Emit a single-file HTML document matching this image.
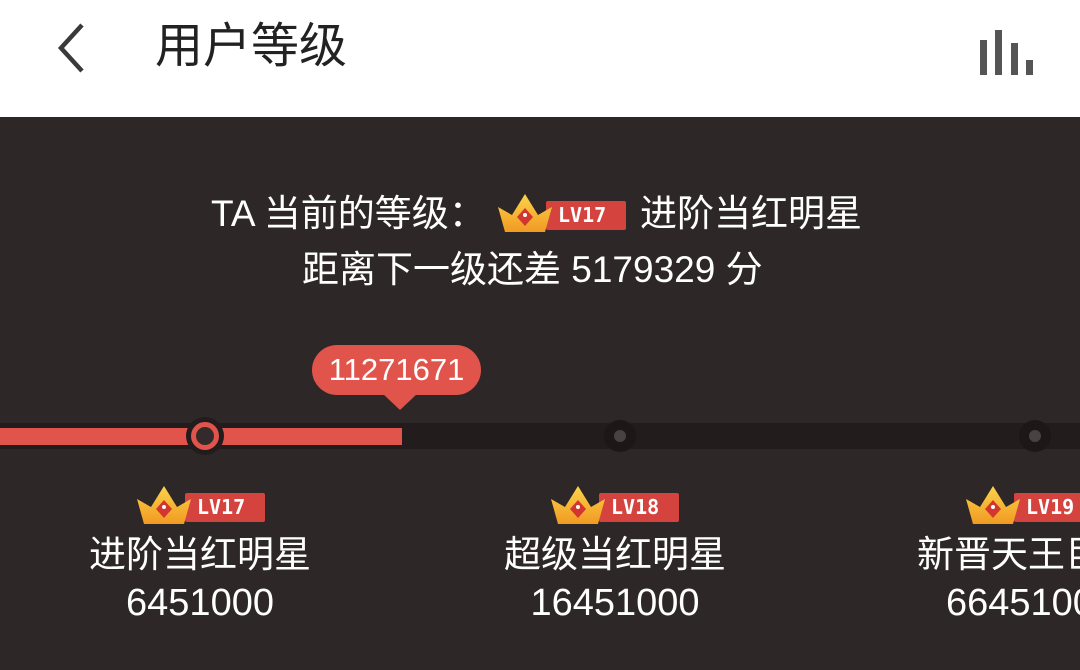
<!DOCTYPE html>
<html><head><meta charset="utf-8"><style>
*{margin:0;padding:0;box-sizing:border-box}
html,body{width:1080px;height:670px;overflow:hidden}
body{background:#2e2727;font-family:"Liberation Sans","Noto Sans CJK SC",sans-serif;position:relative}
#w{position:absolute;left:0;top:0;width:1080px;height:670px;overflow:hidden}
.hdr{position:absolute;left:0;top:0;width:1080px;height:117px;background:#fff}
.t{position:absolute;white-space:nowrap;color:#fff;line-height:1.2}
.badge{position:absolute;width:130px;height:40px}
.lbl{position:absolute;left:48px;top:8px;width:80px;height:29px;background:#d5433f;border-radius:2px;color:#fff;font-weight:bold;font-size:20px;line-height:29px;padding-left:12px;font-family:"DejaVu Sans Mono","Liberation Mono",monospace}
.cr{position:absolute;left:0;top:0}
.c{text-align:center;width:340px}
.n{font-size:37px}
.d{font-size:38px}
</style></head><body><div id="w">
<div class="hdr">
<svg style="position:absolute;left:50px;top:22px" width="40" height="52"><path d="M32 3 L11 26 L32 49" stroke="#3a3a3a" stroke-width="4.5" fill="none"/></svg>
<div class="t" style="left:155px;top:18px;font-size:48px;color:#222">用户等级</div>
<div style="position:absolute;left:980px;top:40px;width:7px;height:35px;background:#555"></div>
<div style="position:absolute;left:995px;top:30px;width:7px;height:45px;background:#555"></div>
<div style="position:absolute;left:1011px;top:43px;width:7px;height:32px;background:#555"></div>
<div style="position:absolute;left:1026px;top:60px;width:7px;height:15px;background:#555"></div>
</div>

<svg width="0" height="0" style="position:absolute"><defs>
<linearGradient id="g" x1="0" y1="0" x2="0" y2="1"><stop offset="0" stop-color="#fcd34a"/><stop offset="1" stop-color="#f09a22"/></linearGradient>
<symbol id="crown" viewBox="0 0 54 40"><polygon points="0,14 14,22 27,1 40,22 54,14 47,39 7,39" fill="url(#g)"/><polygon points="27,15 35,24 27,33 19,24" fill="#d2362f"/><circle cx="27" cy="22" r="2" fill="#fff"/></symbol>
</defs></svg>

<div class="t n" style="left:211px;top:192px">TA 当前的等级：</div>
<div class="badge" style="left:498px;top:193px"><div class="lbl">LV17</div><svg class="cr" width="54" height="40"><use href="#crown"/></svg></div>
<div class="t n" style="left:640px;top:192px">进阶当红明星</div>
<div class="t n" style="left:302px;top:248px">距离下一级还差 5179329 分</div>

<div style="position:absolute;left:312px;top:345px;width:169px;height:50px;background:#e0544c;border-radius:25px;color:#fff;font-size:31px;line-height:50px;text-align:center">11271671</div>
<svg style="position:absolute;left:382px;top:393px" width="36" height="18"><polygon points="0,0 36,0 18,17" fill="#e0544c"/></svg>

<div style="position:absolute;left:0;top:423px;width:1080px;height:26px;background:#221c1c"></div>
<div style="position:absolute;left:0;top:428px;width:402px;height:17px;background:#e0544c"></div>
<div style="position:absolute;left:186px;top:417px;width:38px;height:38px;border-radius:50%;background:#221c1c"></div>
<div style="position:absolute;left:191px;top:422px;width:28px;height:28px;border-radius:50%;border:5px solid #e0544c;background:#332b2b"></div>
<div style="position:absolute;left:604px;top:420px;width:32px;height:32px;border-radius:50%;background:#1d1717"></div>
<div style="position:absolute;left:614px;top:430px;width:12px;height:12px;border-radius:50%;background:#4a4242"></div>
<div style="position:absolute;left:1019px;top:420px;width:32px;height:32px;border-radius:50%;background:#1d1717"></div>
<div style="position:absolute;left:1029px;top:430px;width:12px;height:12px;border-radius:50%;background:#4a4242"></div>

<div class="badge" style="left:137px;top:485px"><div class="lbl">LV17</div><svg class="cr" width="54" height="40"><use href="#crown"/></svg></div>
<div class="t c n" style="left:30px;top:533px">进阶当红明星</div>
<div class="t c d" style="left:30px;top:581px">6451000</div>

<div class="badge" style="left:551px;top:485px"><div class="lbl">LV18</div><svg class="cr" width="54" height="40"><use href="#crown"/></svg></div>
<div class="t c n" style="left:445px;top:533px">超级当红明星</div>
<div class="t c d" style="left:445px;top:581px">16451000</div>

<div class="badge" style="left:966px;top:485px"><div class="lbl">LV19</div><svg class="cr" width="54" height="40"><use href="#crown"/></svg></div>
<div class="t n" style="left:917px;top:533px">新晋天王巨星</div>
<div class="t d" style="left:946px;top:581px">66451000</div>
</div></body></html>
